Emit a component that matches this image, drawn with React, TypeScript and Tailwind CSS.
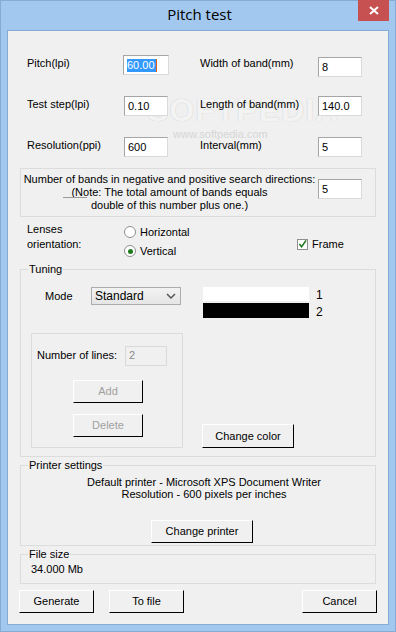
import React from 'react';

const font = { fontFamily: '"Liberation Sans", Arial, sans-serif' };

const TextBox: React.FC<{ value: string; w?: string; selected?: boolean; disabled?: boolean }> = ({ value, w = 'w-[44px]', selected, disabled }) => (
    <div
        className={`${w} h-[20px] flex items-center pl-[3px] border ${disabled
            ? 'bg-[#f0f0f0] border-[#d9d9d9] text-[#8a8a8a]'
            : 'bg-white border-t-[#a5a5a5] border-l-[#a5a5a5] border-r-[#dadada] border-b-[#dadada] text-black'
            }`}
    >
        {selected ? (
            <span className="bg-[#3399ff] text-white leading-[13px] pr-[1px] border-r border-r-[#e0601c]">{value}</span>
        ) : (
            <span>{value}</span>
        )}
    </div>
);

const Button: React.FC<{ label: string; w: string; h?: string; disabled?: boolean; className?: string }> = ({ label, w, h = 'h-[23px]', disabled, className }) => (
    <div
        className={`${w} ${h} flex items-center justify-center border bg-[#f0f0f0] border-t-white border-l-white border-r-black border-b-black ${disabled ? 'text-[#a0a0a0]' : 'text-black'} ${className ?? ''}`}
    >
        {label}
    </div>
);

const Radio: React.FC<{ checked?: boolean }> = ({ checked }) => (
    <div className="w-[12px] h-[12px] rounded-full border border-[#8f8f8f] bg-white flex items-center justify-center">
        {checked && <div className="w-[5px] h-[5px] rounded-full bg-[#1d7a1d]" />}
    </div>
);

const Group: React.FC<{ title?: string; className?: string; children: React.ReactNode }> = ({ title, className, children }) => (
    <fieldset className={`border border-[#dcdcdc] ${className ?? ''}`}>
        {title && <legend className="ml-[7px] px-[1px] leading-[16px]">{title}</legend>}
        {children}
    </fieldset>
);

export default function App() {
    return (
        <div className="w-[396px] h-[632px] bg-[#a3c8f0] border border-[#86acd6] flex flex-col select-none" style={font}>
            {/* Title bar */}
            <div className="h-[29px] flex relative">
                <div className="flex-1 flex items-center justify-center text-[15px] text-black pb-[3px] pl-[3px]" style={{ fontFamily: '"Open Sans", "Noto Sans", sans-serif' }}>
                    Pitch test
                </div>
                <div className="absolute right-[6px] top-[-1px] w-[31px] h-[21px] bg-[#c75050] flex items-center justify-center">
                    <svg width="10" height="9" viewBox="0 0 10 9">
                        <path d="M1 1 L9 8 M9 1 L1 8" stroke="white" strokeWidth="2" />
                    </svg>
                </div>
            </div>

            {/* Client area */}
            <div className="ml-[6px] w-[382px] h-[595px] border border-[#84aad6] bg-[#f0f0f0] text-[11px] text-black relative">
                {/* softpedia watermark */}
                <div className="absolute left-[139px] top-[55px] text-[32px] font-bold tracking-[1px] text-[#f3f3f3] pointer-events-none" style={{ textShadow: '0 0 1px #c4c4c4' }}>
                    SOFTPEDIA
                </div>
                <div className="absolute left-[165px] top-[95px] text-[11px] text-[#d6d6d6] pointer-events-none">www.softpedia.com</div>

                <div className="px-[12px] pt-[25px] flex flex-col relative">
                    {/* parameter rows */}
                    <div className="pl-[7px] grid grid-cols-[96px_77px_118px_44px] leading-[14px]">
                        <div>Pitch(lpi)</div>
                        <div className="-mt-[1px]"><TextBox value="60.00" w="w-[46px]" selected /></div>
                        <div>Width of band(mm)</div>
                        <div className="mt-[1px]"><TextBox value="8" /></div>
                    </div>
                    <div className="pl-[7px] mt-[20px] grid grid-cols-[96px_77px_118px_44px] leading-[14px]">
                        <div>Test step(lpi)</div>
                        <div className="ml-[1px] -mt-[1px]"><TextBox value="0.10" /></div>
                        <div>Length of band(mm)</div>
                        <div className="-mt-[1px]"><TextBox value="140.0" /></div>
                    </div>
                    <div className="pl-[7px] mt-[22px] grid grid-cols-[96px_77px_118px_44px] leading-[14px]">
                        <div>Resolution(ppi)</div>
                        <div className="ml-[1px] -mt-[1px]"><TextBox value="600" /></div>
                        <div>Interval(mm)</div>
                        <div className="-mt-[1px]"><TextBox value="5" /></div>
                    </div>

                    {/* bands group */}
                    <Group className="mt-[11px] h-[49px] relative">
                        <div className="flex">
                            <div className="w-[297px] pt-[4px] text-center leading-[13px]">
                                <div>Number of bands in negative and positive search directions:</div>
                                <div>(Note: The total amount of bands equals</div>
                                <div>double of this number plus one.)</div>
                            </div>
                            <div className="mt-[10px]"><TextBox value="5" /></div>
                        </div>
                        <div className="absolute left-[42px] top-[28px] w-[24px] border-t border-[#9a9a9a]" />
                    </Group>

                    {/* lenses orientation */}
                    <div className="pl-[7px] mt-[5px] h-[39px] flex">
                        <div className="w-[97px] leading-[15px]">
                            <div>Lenses</div>
                            <div>orientation:</div>
                        </div>
                        <div className="w-[173px] flex flex-col">
                            <div className="h-[21px] flex items-center gap-[4px]">
                                <Radio />
                                <span>Horizontal</span>
                            </div>
                            <div className="h-[21px] flex items-center gap-[4px]">
                                <Radio checked />
                                <span>Vertical</span>
                            </div>
                        </div>
                        <div className="mt-[15px] h-[14px] flex items-center gap-[4px]">
                            <div className="w-[11px] h-[11px] border border-[#8f8f8f] bg-white flex items-center justify-center">
                                <svg width="10" height="10" viewBox="0 0 10 10">
                                    <path d="M1.5 5 L4 8 L9 1" stroke="#1d7a1d" strokeWidth="1.8" fill="none" />
                                </svg>
                            </div>
                            <span>Frame</span>
                        </div>
                    </div>

                    {/* tuning */}
                    <Group title="Tuning" className="h-[196px]">
                        <div className="mt-[10px] pl-[24px] flex items-start">
                            <div className="w-[46px] leading-[18px]">Mode</div>
                            <div className="w-[90px] h-[18px] border border-[#acacac] bg-gradient-to-b from-[#f2f2f2] to-[#e5e5e5] flex items-center pl-[3px] text-[12px]">
                                <span className="flex-1">Standard</span>
                                <svg width="16" height="16" viewBox="0 0 16 16" className="mr-[1px]">
                                    <path d="M4 6 L8 10 L12 6" stroke="#555" strokeWidth="1.5" fill="none" />
                                </svg>
                            </div>
                            <div className="ml-[22px] w-[106px] flex flex-col gap-[2px]">
                                <div className="h-[14px] bg-white" />
                                <div className="h-[15px] bg-black" />
                            </div>
                            <div className="ml-[7px] flex flex-col text-[12px] leading-[17px] pt-[0px]">
                                <span>1</span>
                                <span>2</span>
                            </div>
                        </div>
                        <div className="mt-[12px] pl-[10px] flex items-end">
                            <div className="w-[152px] h-[115px] border border-[#dcdcdc] flex flex-col">
                                <div className="mt-[11px] pl-[5px] flex items-center">
                                    <div className="w-[88px] leading-[21px]">Number of lines:</div>
                                    <TextBox value="2" w="w-[42px]" disabled />
                                </div>
                                <Button label="Add" w="w-[70px]" disabled className="mt-[14px] ml-[41px]" />
                                <Button label="Delete" w="w-[70px]" disabled className="mt-[11px] ml-[41px]" />
                            </div>
                            <Button label="Change color" w="w-[92px]" h="h-[24px]" className="ml-[19px]" />
                        </div>
                    </Group>

                    {/* printer */}
                    <Group title="Printer settings" className="h-[89px]">
                        <div className="pt-[3px] text-center leading-[12px] pl-[12px]">
                            <div>Default printer - Microsoft XPS Document Writer</div>
                            <div>Resolution - 600 pixels per inches</div>
                        </div>
                        <div className="mt-[20px] flex justify-center pl-[8px]">
                            <Button label="Change printer" w="w-[102px]" />
                        </div>
                    </Group>

                    {/* file size */}
                    <Group title="File size" className="h-[38px]">
                        <div className="pl-[10px] leading-[14px]">34.000 Mb</div>
                    </Group>

                    {/* bottom buttons */}
                    <div className="mt-[6px] -ml-[1px] flex">
                        <Button label="Generate" w="w-[75px]" />
                        <Button label="To file" w="w-[75px]" className="ml-[15px]" />
                        <Button label="Cancel" w="w-[75px]" className="ml-auto -mr-[1px]" />
                    </div>
                </div>
            </div>
        </div>
    );
}
